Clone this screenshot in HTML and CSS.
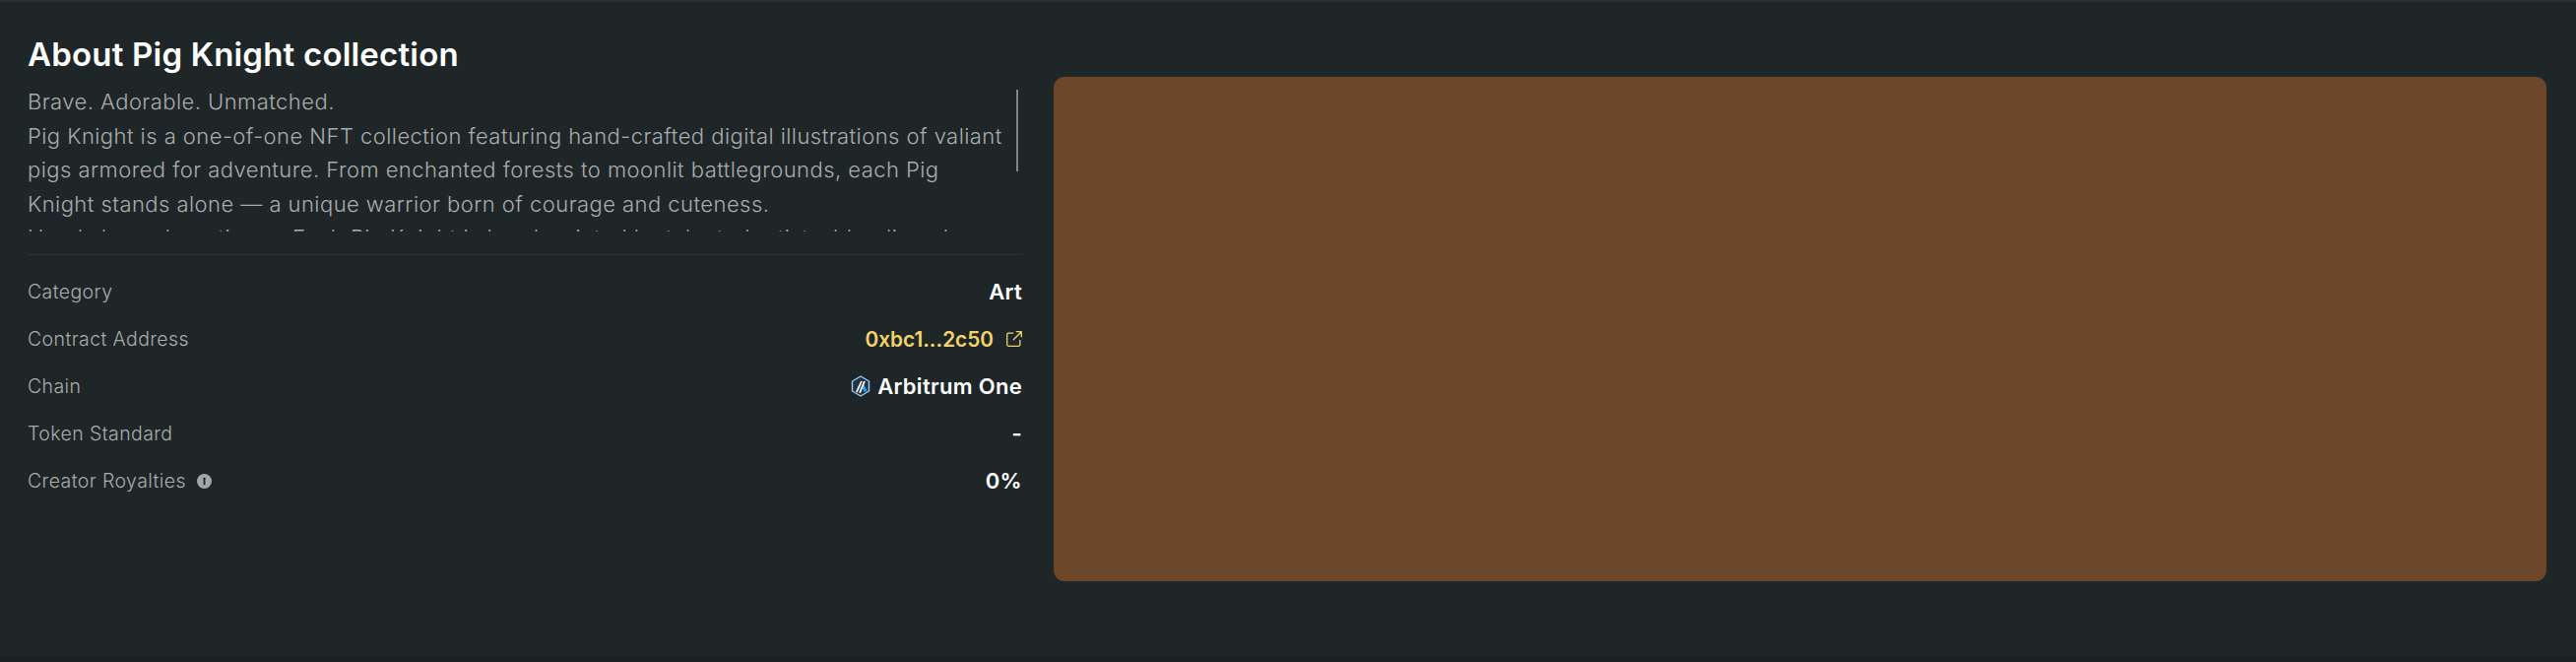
FILE: index.html
```html
<!DOCTYPE html>
<html lang="en">
<head>
    <meta charset="UTF-8">
    <meta name="viewport" content="width=device-width, initial-scale=1.0">
    <title>About Pig Knight collection</title>
    <link rel="stylesheet" href="styles.css">
</head>
<body>
    <div class="about">
        <div class="info-column">
            <h2>About Pig Knight collection</h2>
            <div class="description">
                <p>Brave. Adorable. Unmatched.<br>
                Pig Knight is a one-of-one NFT collection featuring hand-crafted digital illustrations of valiant<br>
                pigs armored for adventure. From enchanted forests to moonlit battlegrounds, each Pig<br>
                Knight stands alone — a unique warrior born of courage and cuteness.<br>
                Hand-drawn by artisans. Each Pig Knight is hand-painted by talented artists, blending charm</p>
                <div class="scroll-thumb"></div>
            </div>
            <div class="details">
                <div class="detail-row">
                    <span class="detail-label">Category</span>
                    <span class="detail-value">Art</span>
                </div>
                <div class="detail-row">
                    <span class="detail-label">Contract Address</span>
                    <span class="detail-value address">0xbc1...2c50
                        <svg class="link-icon" viewBox="1.4 1.2 13.4 13.4" fill="none" stroke="currentColor" stroke-width="1.1" stroke-linecap="round" stroke-linejoin="round">
                            <path d="M7 3H3.2A1.2 1.2 0 0 0 2 4.2v8.6A1.2 1.2 0 0 0 3.2 14h8.6a1.2 1.2 0 0 0 1.2-1.2V9"/>
                            <path d="M10 1.8h4.2V6M14 2 7.5 8.5"/>
                        </svg>
                    </span>
                </div>
                <div class="detail-row">
                    <span class="detail-label">Chain</span>
                    <span class="detail-value chain">
                        <svg class="chain-icon" viewBox="0 0 20 22">
                            <path d="M10 1l8.5 5v10L10 21l-8.5-5V6z" fill="#213147" stroke="#9dcced" stroke-width="1.4" stroke-linejoin="round"/>
                            <path d="M12.6 8.5l4 7-2.6 1.6-3-5.2z" fill="#28a0f0"/>
                            <path d="M5 16.5L10 6h1.8L6.8 17.2zM8.2 17.4L13 6h1.8L10 18z" fill="#fff"/>
                        </svg>
                        Arbitrum One
                    </span>
                </div>
                <div class="detail-row">
                    <span class="detail-label">Token Standard</span>
                    <span class="detail-value">-</span>
                </div>
                <div class="detail-row">
                    <span class="detail-label">Creator Royalties
                        <svg class="info-icon" viewBox="0 0 16 16">
                            <circle cx="8" cy="8" r="8" fill="#a3a7a8"/>
                            <rect x="7" y="4" width="2" height="8" rx="0.6" fill="#1e2627"/>
                        </svg>
                    </span>
                    <span class="detail-value">0%</span>
                </div>
            </div>
        </div>
        <div class="artwork"></div>
    </div>
</body>
</html>
```

FILE: styles.css
```css
* {
    box-sizing: border-box;
}
html, body {
    margin: 0;
    height: 100%;
}
body {
    font-family: Inter, "Noto Sans", sans-serif;
    background-color: #1e2627;
    color: #fff;
}
.about {
    display: grid;
    grid-template-columns: 1010px 1516px;
    gap: 32px;
    height: 672px;
    padding: 0 30px 0 28px;
    border-top: 2px solid #2a3336;
    border-bottom: 6px solid #1a2023;
}
h2 {
    margin: 0;
    padding-top: 32px;
    font-size: 33px;
    line-height: 42px;
    font-weight: 600;
    letter-spacing: 0.2px;
}
.description {
    position: relative;
    height: 149px;
    margin-top: 10px;
    overflow: hidden;
}
.description p {
    margin: 0;
    font-size: 22px;
    line-height: 34.5px;
    font-weight: 300;
    letter-spacing: 0.45px;
    white-space: nowrap;
    color: #a8acad;
}
.scroll-thumb {
    position: absolute;
    top: 5px;
    right: 4px;
    width: 2px;
    height: 83px;
    background-color: #80858a;
}
.details {
    margin-top: 23px;
    padding-top: 13px;
    border-top: 1px solid #2a3336;
}
.detail-row {
    display: flex;
    justify-content: space-between;
    align-items: center;
    height: 48px;
}
.detail-label {
    display: flex;
    align-items: center;
    gap: 11px;
    font-size: 19.5px;
    font-weight: 300;
    letter-spacing: 0.4px;
    color: #a8acad;
}
.detail-value {
    display: flex;
    align-items: center;
    font-size: 22px;
    font-weight: 600;
    letter-spacing: 0.3px;
}
.address {
    gap: 13px;
    font-size: 20.8px;
    letter-spacing: 0;
    color: #f1d26b;
}
.chain {
    gap: 7px;
}
.link-icon {
    width: 16px;
    height: 16px;
}
.chain-icon {
    width: 20px;
    height: 22px;
}
.info-icon {
    width: 15px;
    height: 15px;
}
.artwork {
    height: 512px;
    margin-top: 76px;
    background-color: #6b4629;
    border-radius: 11px;
}
```
